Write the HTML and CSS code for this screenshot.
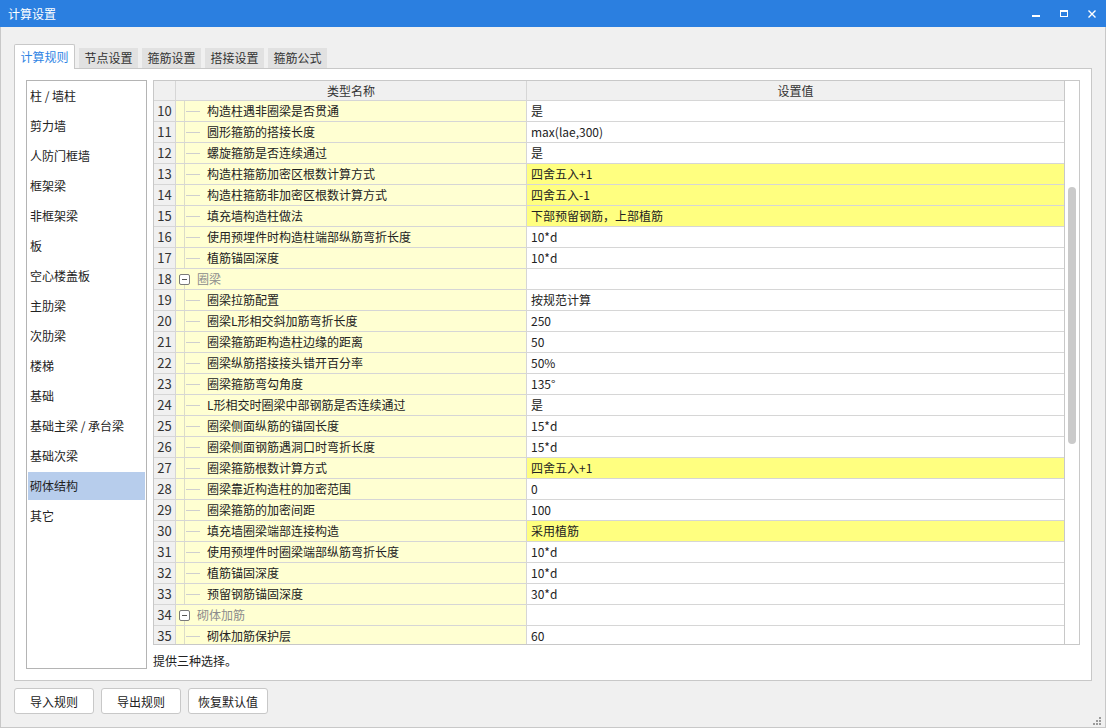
FILE: index.html
```html
<!DOCTYPE html>
<html lang="zh-CN">
<head>
<meta charset="utf-8">
<title>计算设置</title>
<link rel="stylesheet" href="styles.css">
</head>
<body>
<div class="titlebar">
  <span class="title">计算设置</span>
  <svg class="winctl" width="80" height="27" viewBox="0 0 80 27">
    <rect x="6" y="15" width="8" height="2" fill="#fff"/>
    <rect x="34.5" y="10.5" width="7" height="6" fill="none" stroke="#fff" stroke-width="1"/>
    <rect x="34" y="10" width="8" height="2" fill="#fff"/>
    <path d="M62.5 10.5 L69.5 17.5 M69.5 10.5 L62.5 17.5" stroke="#fff" stroke-width="1.4"/>
  </svg>
</div>
<div class="body">
  <div class="tabs">
    <div class="tab active">计算规则</div>
    <div class="tab">节点设置</div>
    <div class="tab">箍筋设置</div>
    <div class="tab">搭接设置</div>
    <div class="tab">箍筋公式</div>
  </div>
  <div class="panel">
    <ul class="cats">
      <li>柱 / 墙柱</li>
      <li>剪力墙</li>
      <li>人防门框墙</li>
      <li>框架梁</li>
      <li>非框架梁</li>
      <li>板</li>
      <li>空心楼盖板</li>
      <li>主肋梁</li>
      <li>次肋梁</li>
      <li>楼梯</li>
      <li>基础</li>
      <li>基础主梁 / 承台梁</li>
      <li>基础次梁</li>
      <li class="sel">砌体结构</li>
      <li>其它</li>
    </ul>
    <div class="right">
      <div class="grid">
        <div class="gridbody">
          <div class="row head"><div class="c num"></div><div class="c name">类型名称</div><div class="c val">设置值</div></div>
          <div class="row"><div class="c num">10</div><div class="c name child">构造柱遇非圈梁是否贯通</div><div class="c val">是</div></div>
          <div class="row"><div class="c num">11</div><div class="c name child">圆形箍筋的搭接长度</div><div class="c val">max(lae,300)</div></div>
          <div class="row"><div class="c num">12</div><div class="c name child">螺旋箍筋是否连续通过</div><div class="c val">是</div></div>
          <div class="row"><div class="c num">13</div><div class="c name child">构造柱箍筋加密区根数计算方式</div><div class="c val hl">四舍五入+1</div></div>
          <div class="row"><div class="c num">14</div><div class="c name child">构造柱箍筋非加密区根数计算方式</div><div class="c val hl">四舍五入-1</div></div>
          <div class="row"><div class="c num">15</div><div class="c name child">填充墙构造柱做法</div><div class="c val hl">下部预留钢筋，上部植筋</div></div>
          <div class="row"><div class="c num">16</div><div class="c name child">使用预埋件时构造柱端部纵筋弯折长度</div><div class="c val">10*d</div></div>
          <div class="row"><div class="c num">17</div><div class="c name child">植筋锚固深度</div><div class="c val">10*d</div></div>
          <div class="row"><div class="c num">18</div><div class="c name group"><span class="minus"></span>圈梁</div><div class="c val"></div></div>
          <div class="row"><div class="c num">19</div><div class="c name child">圈梁拉筋配置</div><div class="c val">按规范计算</div></div>
          <div class="row"><div class="c num">20</div><div class="c name child">圈梁L形相交斜加筋弯折长度</div><div class="c val">250</div></div>
          <div class="row"><div class="c num">21</div><div class="c name child">圈梁箍筋距构造柱边缘的距离</div><div class="c val">50</div></div>
          <div class="row"><div class="c num">22</div><div class="c name child">圈梁纵筋搭接接头错开百分率</div><div class="c val">50%</div></div>
          <div class="row"><div class="c num">23</div><div class="c name child">圈梁箍筋弯勾角度</div><div class="c val">135°</div></div>
          <div class="row"><div class="c num">24</div><div class="c name child">L形相交时圈梁中部钢筋是否连续通过</div><div class="c val">是</div></div>
          <div class="row"><div class="c num">25</div><div class="c name child">圈梁侧面纵筋的锚固长度</div><div class="c val">15*d</div></div>
          <div class="row"><div class="c num">26</div><div class="c name child">圈梁侧面钢筋遇洞口时弯折长度</div><div class="c val">15*d</div></div>
          <div class="row"><div class="c num">27</div><div class="c name child">圈梁箍筋根数计算方式</div><div class="c val hl">四舍五入+1</div></div>
          <div class="row"><div class="c num">28</div><div class="c name child">圈梁靠近构造柱的加密范围</div><div class="c val">0</div></div>
          <div class="row"><div class="c num">29</div><div class="c name child">圈梁箍筋的加密间距</div><div class="c val">100</div></div>
          <div class="row"><div class="c num">30</div><div class="c name child">填充墙圈梁端部连接构造</div><div class="c val hl">采用植筋</div></div>
          <div class="row"><div class="c num">31</div><div class="c name child">使用预埋件时圈梁端部纵筋弯折长度</div><div class="c val">10*d</div></div>
          <div class="row"><div class="c num">32</div><div class="c name child">植筋锚固深度</div><div class="c val">10*d</div></div>
          <div class="row"><div class="c num">33</div><div class="c name child">预留钢筋锚固深度</div><div class="c val">30*d</div></div>
          <div class="row"><div class="c num">34</div><div class="c name group"><span class="minus"></span>砌体加筋</div><div class="c val"></div></div>
          <div class="row"><div class="c num">35</div><div class="c name child">砌体加筋保护层</div><div class="c val">60</div></div>
        </div>
        <div class="vscroll"><div class="thumb"></div></div>
      </div>
      <div class="desc">提供三种选择。</div>
    </div>
  </div>
  <div class="buttons">
    <button class="btn">导入规则</button>
    <button class="btn">导出规则</button>
    <button class="btn">恢复默认值</button>
  </div>
  <svg class="grip" width="10" height="10" viewBox="0 0 10 10">
    <rect x="7" y="1" width="2" height="2" fill="#9a9a9a"/>
    <rect x="4" y="4" width="2" height="2" fill="#9a9a9a"/>
    <rect x="7" y="4" width="2" height="2" fill="#9a9a9a"/>
    <rect x="1" y="7" width="2" height="2" fill="#9a9a9a"/>
    <rect x="4" y="7" width="2" height="2" fill="#9a9a9a"/>
    <rect x="7" y="7" width="2" height="2" fill="#9a9a9a"/>
  </svg>
</div>
</body>
</html>
```
FILE: styles.css
```css
* { box-sizing: border-box; }
html, body { margin: 0; padding: 0; }
body {
  width: 1106px;
  height: 728px;
  overflow: hidden;
  background: #f0f0f0;
  font-family: "Noto Sans CJK SC", "Noto Sans", sans-serif;
  font-size: 12px;
  color: #222;
}
.titlebar {
  height: 27px;
  background: #2b7fe0;
  display: flex;
  align-items: center;
  padding-left: 8px;
}
.title { color: #fff; font-size: 12px; line-height: 27px; }
.winctl { margin-left: auto; display: block; }

.body {
  position: relative;
  height: 701px;
  border: 1px solid #c8c8c8;
  border-top: 0;
  padding: 17px 13px 0 13px;
}
.tabs {
  display: flex;
  align-items: flex-end;
  gap: 4px;
  height: 25px;
  position: relative;
  z-index: 1;
}
.tab {
  width: 59px;
  height: 20px;
  margin-bottom: 1px;
  background: #e1e1e1;
  color: #333;
  text-align: center;
  line-height: 20px;
}
.tab.active {
  width: 61px;
  height: 25px;
  margin-bottom: 0;
  background: #fff;
  border: 1px solid #c8c8c8;
  border-bottom: 0;
  border-radius: 2px 2px 0 0;
  color: #2f84e4;
  line-height: 24px;
}
.panel {
  margin-top: -1px;
  width: 1078px;
  height: 613px;
  background: #fff;
  border: 1px solid #c8c8c8;
  padding: 11px;
  display: flex;
  gap: 6px;
}
.cats {
  list-style: none;
  margin: 0;
  width: 121px;
  height: 589px;
  border: 1px solid #b4b4b4;
  padding: 1px 1px 0 1px;
}
.cats li {
  height: 28px;
  margin-bottom: 2px;
  line-height: 28px;
  padding-left: 2px;
  color: #222;
}
.cats li.sel { background: #b7cdec; }
.right { width: 927px; display: flex; flex-direction: column; }
.grid {
  height: 565px;
  border: 1px solid #c8c8c8;
  display: flex;
}
.gridbody { width: 910px; overflow: hidden; }
.row {
  display: grid;
  grid-template-columns: 22px 351px 537px;
  height: 21px;
  border-bottom: 1px solid #d6d6d6;
}
.row.head { height: 20px; background: #f0f0f0; color: #333; }
.c {
  line-height: 20px;
  white-space: nowrap;
  overflow: hidden;
}
.head .c { line-height: 19px; text-align: center; }
.num {
  border-right: 1px solid #d6d6d6;
  background: #f0f0f0;
  text-align: center;
  font-size: 13px;
  color: #333;
}
.name {
  border-right: 1px solid #d6d6d6;
  background: #ffffd2;
}
.head .name { background: #f0f0f0; }
.val { padding-left: 4px; background: #fff; }
.head .val { background: #f0f0f0; padding-left: 0; }
.val.hl { background: #ffff80; }
.name.child {
  padding-left: 31px;
  background:
    linear-gradient(#dcdcc8, #dcdcc8) 8px 0 / 1px 100% no-repeat,
    linear-gradient(#cfcfcf, #cfcfcf) 10px 10px / 14px 1px no-repeat,
    #ffffd2;
}
.name.group {
  padding-left: 3px;
  color: #8c8c8c;
  display: flex;
  align-items: center;
  background:
    linear-gradient(#dcdcc8, #dcdcc8) 8px 16px / 1px 100% no-repeat,
    #ffffd2;
}
.minus {
  width: 11px;
  height: 11px;
  border: 1px solid #7a7a7a;
  border-radius: 2px;
  margin-right: 7px;
  background: linear-gradient(#555, #555) center / 5px 1px no-repeat, #fff;
}
.vscroll {
  width: 15px;
  border-left: 1px solid #c8c8c8;
  background: #fff;
  padding: 106px 0 0 3px;
}
.thumb {
  width: 8px;
  height: 257px;
  border-radius: 4px;
  background: #cacaca;
}
.desc { line-height: 32px; color: #222; }
.buttons { display: flex; gap: 7px; margin-top: 7px; }
.btn {
  width: 80px;
  height: 26px;
  background: #fff;
  border: 1px solid #c8c8c8;
  border-radius: 3px;
  font-family: inherit;
  font-size: 12px;
  color: #222;
  padding: 0;
}
.grip { position: absolute; right: 3px; bottom: 1px; display: block; }
```
